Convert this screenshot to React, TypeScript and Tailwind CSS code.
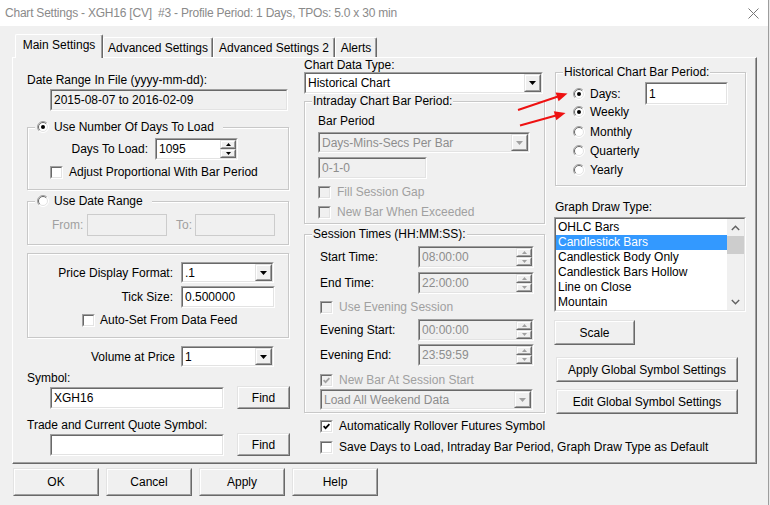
import React from "react";

type P = { className?: string; inner?: string; children?: React.ReactNode };

function Sunken({ className = "", inner = "", children }: P) {
  return (
    <div className={`shrink-0 border border-t-[#a0a0a0] border-l-[#a0a0a0] border-r-white border-b-white ${className}`}>
      <div className={`h-full w-full border border-t-[#696969] border-l-[#696969] border-r-[#e3e3e3] border-b-[#e3e3e3] ${inner}`}>
        {children}
      </div>
    </div>
  );
}

function Raised({ className = "", inner = "", children }: P) {
  return (
    <div className={`shrink-0 border border-t-[#e3e3e3] border-l-[#e3e3e3] border-r-[#696969] border-b-[#696969] bg-[#f0f0f0] ${className}`}>
      <div className={`h-full w-full border border-t-white border-l-white border-r-[#a0a0a0] border-b-[#a0a0a0] flex items-center justify-center ${inner}`}>
        {children}
      </div>
    </div>
  );
}

function Tri({ up = false, disabled = false, small = false }: { up?: boolean; disabled?: boolean; small?: boolean }) {
  const w = small ? 5 : 7;
  const h = small ? 3 : 4;
  const d = up ? `M0 ${h}H${w}L${w / 2} 0Z` : `M0 0H${w}L${w / 2} ${h}Z`;
  return (
    <svg width={w} height={h} viewBox={`0 0 ${w} ${h}`}>
      <path d={d} fill={disabled ? "#a0a0a0" : "#000"} />
    </svg>
  );
}

function Combo({ className = "", text, disabled = false }: { className?: string; text: string; disabled?: boolean }) {
  return (
    <Sunken className={className} inner={`flex items-stretch ${disabled ? "bg-[#f0f0f0]" : "bg-white"}`}>
      <span className={`flex-1 flex items-center pl-[2px] whitespace-nowrap overflow-hidden ${disabled ? "text-[#8d8d8d]" : ""}`}>{text}</span>
      <Raised className="w-[17px]">
        <Tri disabled={disabled} />
      </Raised>
    </Sunken>
  );
}

function Spin({ className = "", text, disabled = false }: { className?: string; text: string; disabled?: boolean }) {
  return (
    <Sunken className={className} inner={`flex items-stretch ${disabled ? "bg-[#f0f0f0]" : "bg-white"}`}>
      <span className={`flex-1 flex items-center pl-[2px] ${disabled ? "text-[#8d8d8d]" : ""}`}>{text}</span>
      <div className="w-[16px] flex flex-col">
        <Raised className="flex-1">
          <Tri up small disabled={disabled} />
        </Raised>
        <Raised className="flex-1">
          <Tri small disabled={disabled} />
        </Raised>
      </div>
    </Sunken>
  );
}

function TextBox({ className = "", children, disabled = false }: { className?: string; children?: React.ReactNode; disabled?: boolean }) {
  return (
    <Sunken className={className} inner={`flex items-center pl-[2px] ${disabled ? "bg-[#f0f0f0] text-[#8d8d8d]" : "bg-white"}`}>
      {children}
    </Sunken>
  );
}

function Check({ checked = false, disabled = false }: { checked?: boolean; disabled?: boolean }) {
  return (
    <Sunken className="w-[13px] h-[13px]" inner={`flex items-center justify-center ${disabled ? "bg-[#f0f0f0]" : "bg-white"}`}>
      {checked && (
        <svg width="7" height="7" viewBox="0 0 7 7">
          <path d="M0.6 3.2 L2.6 5.2 L6.4 1.2" stroke={disabled ? "#a0a0a0" : "#000"} strokeWidth="1.7" fill="none" />
        </svg>
      )}
    </Sunken>
  );
}

function CheckRow({ className = "", label, checked = false, disabled = false, gap = "gap-[6px]" }: { className?: string; label: string; checked?: boolean; disabled?: boolean; gap?: string }) {
  return (
    <div className={`flex items-center h-[14px] whitespace-nowrap ${gap} ${className}`}>
      <Check checked={checked} disabled={disabled} />
      <span className={disabled ? "text-[#a0a0a0]" : ""}>{label}</span>
    </div>
  );
}

function Radio({ checked = false }: { checked?: boolean }) {
  return (
    <svg width="12" height="12" viewBox="0 0 12 12" className="shrink-0">
      <circle cx="6" cy="6" r="5.5" fill="#fff" />
      <path d="M2.1 9.9 A5.5 5.5 0 0 1 9.9 2.1" stroke="#a0a0a0" fill="none" />
      <path d="M9.9 2.1 A5.5 5.5 0 0 1 2.1 9.9" stroke="#ffffff" fill="none" />
      <path d="M2.8 9.2 A4.5 4.5 0 0 1 9.2 2.8" stroke="#696969" fill="none" />
      <path d="M9.2 2.8 A4.5 4.5 0 0 1 2.8 9.2" stroke="#e3e3e3" fill="none" />
      {checked && <circle cx="6" cy="6" r="2" fill="#000" />}
    </svg>
  );
}

function Group({ className = "", legend, children }: { className?: string; legend: React.ReactNode; children?: React.ReactNode }) {
  return (
    <fieldset className={`shrink-0 border border-[#c8c8c8] shadow-[inset_1px_1px_0_#fff,1px_1px_0_#fff] ${className}`}>
      <legend className="ml-[7px] bg-[#f0f0f0] leading-[14px]">{legend}</legend>
      {children}
    </fieldset>
  );
}

function Btn({ className = "", children }: P) {
  return <Raised className={className}>{children}</Raised>;
}

function Tab({ label, active = false, className = "" }: { label: string; active?: boolean; className?: string }) {
  return (
    <div
      className={`shrink-0 flex items-center justify-center bg-[#f0f0f0] rounded-t-[2px] border-t border-l border-r border-t-white border-l-white border-r-[#696969] shadow-[inset_-1px_0_0_#a0a0a0] whitespace-nowrap ${
        active ? "h-[24px] mb-[-1px] pb-[3px] relative z-10" : "h-[20px]"
      } ${className}`}
    >
      {label}
    </div>
  );
}

const listItems = ["OHLC Bars", "Candlestick Bars", "Candlestick Body Only", "Candlestick Bars Hollow", "Line on Close", "Mountain"];

export default function App() {
  return (
    <div className="w-[770px] h-[505px] flex bg-[#e9e9e9] font-['Liberation_Sans',Arial,sans-serif] text-[12px] leading-[14px] text-black overflow-hidden relative">
      <div className="w-[769px] h-full flex flex-col bg-[#f0f0f0] border-r border-[#9d9d9d] shrink-0">
        {/* Title bar */}
        <div className="h-[26px] bg-white flex items-center pl-[5px] shrink-0">
          <span className="text-[#8a8a8a] text-[12px] tracking-[-0.22px] whitespace-nowrap">Chart Settings - XGH16 [CV]&nbsp; #3 - Profile Period: 1 Days, TPOs: 5.0 x 30 min</span>
          <svg width="11" height="11" viewBox="0 0 11 11" className="ml-auto mr-[9px]">
            <path d="M0.5 0.5 L10.5 10.5 M10.5 0.5 L0.5 10.5" stroke="#777" strokeWidth="1" />
          </svg>
        </div>

        {/* Tabs */}
        <div className="mt-[8px] ml-[15px] flex items-end h-[23px] relative z-10 shrink-0">
          <Tab label="Main Settings" active className="w-[88px]" />
          <Tab label="Advanced Settings" className="w-[110px]" />
          <Tab label="Advanced Settings 2" className="w-[122px]" />
          <Tab label="Alerts" className="w-[42px]" />
        </div>

        {/* Panel */}
        <div className="ml-[12px] w-[745px] h-[407px] shrink-0 flex pl-[14px] border border-t-white border-l-white border-r-[#696969] border-b-[#696969] shadow-[inset_-1px_-1px_0_#a0a0a0]">
          {/* Left column */}
          <div className="w-[263px] shrink-0 flex flex-col">
            <div className="mt-[15px] whitespace-nowrap">Date Range In File (yyyy-mm-dd):</div>
            <Sunken className="mt-[2px] ml-[23px] w-[238px] h-[22px]" inner="bg-[#f0f0f0] flex items-center pl-[2px]">
              2015-08-07 to 2016-02-09
            </Sunken>

            <Group
              className="mt-[9px] w-[262px] pb-[10px]"
              legend={
                <span className="flex items-center gap-[5px] pl-[2px] pr-[9px]">
                  <Radio checked />
                  Use Number Of Days To Load
                </span>
              }
            >
              <div className="mt-[4px] flex items-center">
                <span className="w-[120px] text-right">Days To Load:</span>
                <Spin className="ml-[7px] w-[83px] h-[22px]" text="1095" />
              </div>
              <CheckRow className="mt-[5px] pl-[22px]" label="Adjust Proportional With Bar Period" />
            </Group>

            <Group
              className="mt-[4px] w-[262px] pb-[8px]"
              legend={
                <span className="flex items-center gap-[5px] pl-[2px] pr-[9px]">
                  <Radio />
                  Use Date Range
                </span>
              }
            >
              <div className="mt-[6px] flex items-center pl-[24px]">
                <span className="w-[35px] text-[#a0a0a0]">From:</span>
                <div className="w-[80px] h-[22px] border border-[#cccccc] bg-[#f0f0f0]" />
                <span className="ml-[9px] w-[19px] text-[#a0a0a0]">To:</span>
                <div className="w-[80px] h-[22px] border border-[#cccccc] bg-[#f0f0f0]" />
              </div>
            </Group>

            <div className="mt-[8px] w-[262px] border border-[#c8c8c8] shadow-[inset_1px_1px_0_#fff,1px_1px_0_#fff] pt-[8px] pb-[10px]">
              <div className="flex items-center">
                <span className="w-[145px] text-right">Price Display Format:</span>
                <Combo className="ml-[8px] w-[93px] h-[21px]" text=".1" />
              </div>
              <div className="mt-[3px] flex items-center">
                <span className="w-[145px] text-right">Tick Size:</span>
                <TextBox className="ml-[8px] w-[94px] h-[22px]">0.500000</TextBox>
              </div>
              <CheckRow className="mt-[5px] pl-[54px]" gap="gap-[5px]" label="Auto-Set From Data Feed" />
            </div>

            <div className="mt-[8px] flex items-center">
              <span className="w-[148px] text-right">Volume at Price</span>
              <Combo className="ml-[6px] w-[93px] h-[21px]" text="1" />
            </div>

            <div className="mt-[4px]">Symbol:</div>
            <div className="mt-[1px] flex items-center">
              <TextBox className="ml-[23px] w-[174px] h-[22px]">XGH16</TextBox>
              <Btn className="ml-[13px] w-[53px] h-[23px]">Find</Btn>
            </div>

            <div className="mt-[9px] whitespace-nowrap">Trade and Current Quote Symbol:</div>
            <div className="mt-[1px] flex items-center">
              <TextBox className="ml-[23px] w-[174px] h-[22px]" />
              <Btn className="ml-[13px] w-[53px] h-[23px]">Find</Btn>
            </div>
          </div>

          {/* Middle column */}
          <div className="ml-[14px] w-[242px] shrink-0 flex flex-col">
            <div className="mt-[1px] leading-[13px]">Chart Data Type:</div>
            <Combo className="w-[239px] h-[22px]" text="Historical Chart" />

            <Group className="w-[241px] pb-[4px]" legend={<span className="px-[1px]">Intraday Chart Bar Period:</span>}>
              <div className="pl-[13px] flex flex-col">
                <div className="mt-[6px]">Bar Period</div>
                <Combo disabled className="mt-[4px] w-[212px] h-[21px]" text="Days-Mins-Secs Per Bar" />
                <TextBox disabled className="mt-[4px] w-[109px] h-[22px]">0-1-0</TextBox>
                <CheckRow disabled className="mt-[6px]" label="Fill Session Gap" />
                <CheckRow disabled className="mt-[6px]" label="New Bar When Exceeded" />
              </div>
            </Group>

            <Group className="mt-[3px] w-[241px] pb-[2px]" legend={<span className="px-[1px]">Session Times (HH:MM:SS):</span>}>
              <div className="pl-[15px] flex flex-col">
                <div className="mt-[5px] flex items-center">
                  <span className="w-[98px]">Start Time:</span>
                  <Spin disabled className="w-[116px] h-[22px]" text="08:00:00" />
                </div>
                <div className="mt-[4px] flex items-center">
                  <span className="w-[98px]">End Time:</span>
                  <Spin disabled className="w-[116px] h-[22px]" text="22:00:00" />
                </div>
                <CheckRow disabled className="mt-[6px]" label="Use Evening Session" />
                <div className="mt-[5px] flex items-center">
                  <span className="w-[98px]">Evening Start:</span>
                  <Spin disabled className="w-[116px] h-[22px]" text="00:00:00" />
                </div>
                <div className="mt-[3px] flex items-center">
                  <span className="w-[98px]">Evening End:</span>
                  <Spin disabled className="w-[116px] h-[22px]" text="23:59:59" />
                </div>
                <CheckRow disabled checked className="mt-[7px]" label="New Bar At Session Start" />
                <Combo disabled className="mt-[2px] w-[213px] h-[21px]" text="Load All Weekend Data" />
              </div>
            </Group>

            <CheckRow checked className="mt-[6px] ml-[16px]" label="Automatically Rollover Futures Symbol" />
            <CheckRow className="mt-[7px] ml-[16px]" label="Save Days to Load, Intraday Bar Period, Graph Draw Type as Default" />
          </div>

          {/* Right column */}
          <div className="ml-[8px] w-[193px] shrink-0 flex flex-col">
            <Group className="mt-[7px] ml-[1px] w-[191px] pb-[8px]" legend={<span className="px-[1px]">Historical Chart Bar Period:</span>}>
              <div className="pl-[17px] flex flex-col">
                <div className="mt-[3px] h-[23px] flex items-center">
                  <Radio checked />
                  <span className="ml-[5px] w-[55px]">Days:</span>
                  <TextBox className="w-[83px] h-[23px]">1</TextBox>
                </div>
                <div className="mt-[0px] h-[14px] flex items-center gap-[5px]">
                  <Radio checked />
                  Weekly
                </div>
                <div className="mt-[6px] h-[14px] flex items-center gap-[5px]">
                  <Radio />
                  Monthly
                </div>
                <div className="mt-[5px] h-[14px] flex items-center gap-[5px]">
                  <Radio />
                  Quarterly
                </div>
                <div className="mt-[5px] h-[14px] flex items-center gap-[5px]">
                  <Radio />
                  Yearly
                </div>
              </div>
            </Group>

            <div className="mt-[14px] ml-[1px]">Graph Draw Type:</div>
            <Sunken className="mt-[3px] w-[192px] h-[95px]" inner="bg-white flex items-stretch">
              <div className="flex-1 flex flex-col pt-[1px]">
                {listItems.map((it, i) => (
                  <div key={it} className={`h-[15px] leading-[15px] pl-[2px] whitespace-nowrap ${i === 1 ? "bg-[#3399ff] text-white" : ""}`}>
                    {it}
                  </div>
                ))}
              </div>
              <div className="w-[17px] bg-[#f0f0f0] flex flex-col">
                <div className="h-[17px] flex items-center justify-center">
                  <svg width="9" height="6" viewBox="0 0 9 6">
                    <path d="M0.8 5 L4.5 1.3 L8.2 5" stroke="#606060" strokeWidth="1.4" fill="none" />
                  </svg>
                </div>
                <div className="h-[18px] bg-[#cdcdcd]" />
                <div className="flex-1" />
                <div className="h-[17px] flex items-center justify-center">
                  <svg width="9" height="6" viewBox="0 0 9 6">
                    <path d="M0.8 1 L4.5 4.7 L8.2 1" stroke="#606060" strokeWidth="1.4" fill="none" />
                  </svg>
                </div>
              </div>
            </Sunken>

            <Btn className="mt-[8px] w-[81px] h-[25px]">Scale</Btn>
            <Btn className="mt-[12px] ml-[2px] w-[182px] h-[25px]">Apply Global Symbol Settings</Btn>
            <Btn className="mt-[7px] ml-[2px] w-[182px] h-[25px]">Edit Global Symbol Settings</Btn>
          </div>
        </div>

        {/* Bottom buttons */}
        <div className="mt-[4px] ml-[13px] flex gap-[7px] shrink-0">
          <Btn className="w-[86px] h-[28px]">OK</Btn>
          <Btn className="w-[86px] h-[28px]">Cancel</Btn>
          <Btn className="w-[86px] h-[28px]">Apply</Btn>
          <Btn className="w-[86px] h-[28px]">Help</Btn>
        </div>
      </div>

      {/* Red annotation arrows */}
      <svg className="absolute inset-0 pointer-events-none" width="770" height="505" viewBox="0 0 770 505">
        <line x1="518" y1="110" x2="558" y2="96.5" stroke="#ee1111" strokeWidth="2" />
        <path d="M567.5 93.6 L555.6 92.6 L558.6 101.3 Z" fill="#ee1111" />
        <line x1="520" y1="125.5" x2="556" y2="115.5" stroke="#ee1111" strokeWidth="2" />
        <path d="M565.5 113 L553.8 111.3 L556.3 120.2 Z" fill="#ee1111" />
      </svg>
    </div>
  );
}
